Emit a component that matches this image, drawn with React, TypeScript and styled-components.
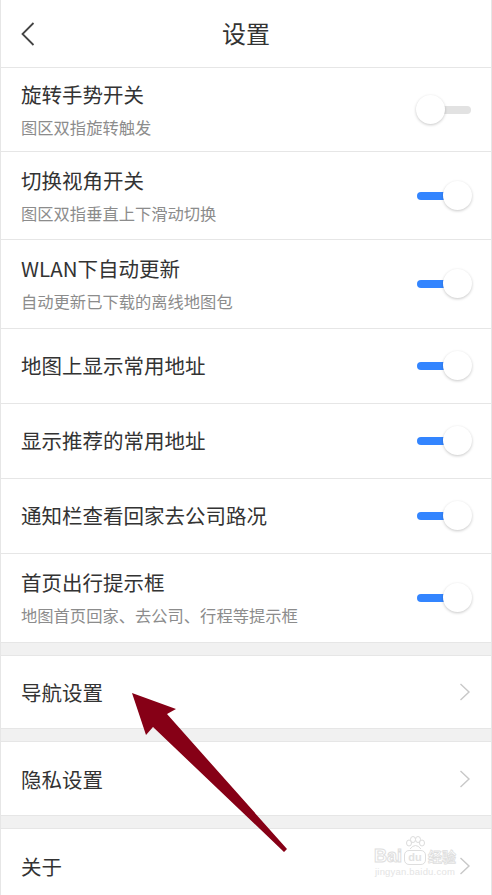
import React from "react";
import styled, { createGlobalStyle } from "styled-components";

const Global = createGlobalStyle`
  html, body { margin: 0; padding: 0; background: #ffffff; }
  body { font-family: "Noto Sans CJK SC", "Noto Sans", sans-serif; }
  * { box-sizing: border-box; }
`;

const Page = styled.div`
  position: relative;
  width: 492px;
  height: 895px;
  overflow: hidden;
  background: #ffffff;
  border-left: 1px solid #e6e6e6;
  border-right: 1px solid #e6e6e6;
`;

const Header = styled.header`
  position: relative;
  height: 68px;
  display: flex;
  align-items: center;
  justify-content: center;
  border-bottom: 1px solid #e6e6e6;
`;

const BackButton = styled.div`
  position: absolute;
  left: 20px;
  top: 22px;
  width: 14px;
  height: 24px;
  display: flex;
`;

const HeaderTitle = styled.h1`
  margin: 0;
  font-size: 24px;
  font-weight: 400;
  color: #333333;
  line-height: 30px;
  padding-bottom: 1px;
`;

const Row = styled.div<{ $h: number }>`
  height: ${(p) => p.$h}px;
  display: flex;
  align-items: center;
  justify-content: space-between;
  padding: 0 20px 0 20px;
  border-bottom: 1px solid #e6e6e6;
  background: #ffffff;
`;

const TextCol = styled.div`
  display: flex;
  flex-direction: column;
  gap: 10px;
  margin-top: -2px;
`;

const Title = styled.div`
  font-size: 20.5px;
  line-height: 26px;
  color: #333333;
`;

const Sub = styled.div`
  font-size: 16.3px;
  line-height: 20px;
  color: #8c8c8c;
`;

const Switch = styled.div<{ $on: boolean }>`
  position: relative;
  width: 56px;
  height: 30px;
  flex-shrink: 0;
  margin-right: -1px;
  &::before {
    content: "";
    position: absolute;
    left: 1px;
    right: 1px;
    top: 11px;
    height: 8px;
    border-radius: 4px;
    background: ${(p) => (p.$on ? "#3385ff" : "#e2e2e2")};
  }
`;

const Knob = styled.span<{ $on: boolean }>`
  position: absolute;
  top: 0;
  ${(p) => (p.$on ? "right: 0;" : "left: 0;")}
  width: 29px;
  height: 29px;
  border-radius: 50%;
  background: #ffffff;
  box-shadow: 0 1px 3px rgba(0, 0, 0, 0.22);
`;

const Spacer = styled.div`
  height: 13px;
  background: #f1f1f1;
  border-bottom: 1px solid #e6e6e6;
`;

const Chevron = styled.div`
  width: 12px;
  height: 18px;
  display: flex;
`;

const ArrowLayer = styled.svg`
  position: absolute;
  left: -1px;
  top: 0;
  pointer-events: none;
`;

const Watermark = styled.div`
  position: absolute;
  left: 373px;
  top: 836px;
  display: flex;
  flex-direction: column;
  align-items: center;
  pointer-events: none;
`;

const MarkTop = styled.div`
  display: flex;
  align-items: flex-end;
  gap: 2px;
`;

const MarkWord = styled.span`
  font-family: "Liberation Sans", Arial, sans-serif;
  font-weight: 700;
  font-size: 18px;
  line-height: 18px;
  color: #ffffff;
  -webkit-text-stroke: 1px #dedede;
`;

const MarkCn = styled.span`
  font-family: "Noto Sans CJK SC", sans-serif;
  font-weight: 700;
  font-size: 14px;
  line-height: 18px;
  color: #ffffff;
  -webkit-text-stroke: 0.8px #dedede;
`;

const PawBox = styled.div`
  display: flex;
  flex-direction: column;
  align-items: center;
`;

const DuBox = styled.span`
  font-family: "Liberation Sans", Arial, sans-serif;
  font-weight: 700;
  font-size: 11px;
  line-height: 11px;
  padding: 1px 3px;
  border: 1px solid #dedede;
  border-radius: 5px;
  color: #e2e2e2;
`;

const MarkUrl = styled.span`
  font-family: "Liberation Sans", Arial, sans-serif;
  font-size: 9.5px;
  line-height: 12px;
  color: #e4e4e4;
  margin-top: 1px;
  letter-spacing: 0.2px;
`;

type Toggle = { title: string; sub?: string; on: boolean; h: number };

const toggles: Toggle[] = [
  { title: "旋转手势开关", sub: "图区双指旋转触发", on: false, h: 84 },
  { title: "切换视角开关", sub: "图区双指垂直上下滑动切换", on: true, h: 88 },
  { title: "WLAN下自动更新", sub: "自动更新已下载的离线地图包", on: true, h: 89 },
  { title: "地图上显示常用地址", on: true, h: 75 },
  { title: "显示推荐的常用地址", on: true, h: 75 },
  { title: "通知栏查看回家去公司路况", on: true, h: 75 },
  { title: "首页出行提示框", sub: "地图首页回家、去公司、行程等提示框", on: true, h: 89 },
];

const ChevronIcon = () => (
  <Chevron>
    <svg width="12" height="18" viewBox="0 0 12 18">
      <polyline points="1.5,1 10,9 1.5,17" fill="none" stroke="#c8c8c8" strokeWidth="1.4" />
    </svg>
  </Chevron>
);

const LinkRow = ({ title, h }: { title: string; h: number }) => (
  <Row $h={h}>
    <Title>{title}</Title>
    <ChevronIcon />
  </Row>
);

export default function App() {
  return (
    <>
      <Global />
      <Page>
        <Header>
          <BackButton>
            <svg width="14" height="24" viewBox="0 0 14 24">
              <polyline points="12.5,1 1.5,12 12.5,23" fill="none" stroke="#444444" strokeWidth="1.8" />
            </svg>
          </BackButton>
          <HeaderTitle>设置</HeaderTitle>
        </Header>
        {toggles.map((t) => (
          <Row key={t.title} $h={t.h}>
            <TextCol>
              <Title>{t.title}</Title>
              {t.sub && <Sub>{t.sub}</Sub>}
            </TextCol>
            <Switch $on={t.on}>
              <Knob $on={t.on} />
            </Switch>
          </Row>
        ))}
        <Spacer />
        <LinkRow title="导航设置" h={73} />
        <Spacer />
        <LinkRow title="隐私设置" h={74} />
        <Spacer />
        <LinkRow title="关于" h={74} />
        <Watermark>
          <MarkTop>
            <MarkWord>Bai</MarkWord>
            <PawBox>
              <svg width="22" height="14" viewBox="0 0 22 14">
                <g fill="#ffffff" stroke="#dcdcdc" strokeWidth="1">
                  <ellipse cx="5" cy="7" rx="2.5" ry="3" />
                  <ellipse cx="9" cy="3.5" rx="2.5" ry="3" />
                  <ellipse cx="14" cy="3.5" rx="2.5" ry="3" />
                  <ellipse cx="18" cy="7" rx="2.5" ry="3" />
                  <path d="M6 13 Q11.5 6 17 13" />
                </g>
              </svg>
              <DuBox>du</DuBox>
            </PawBox>
            <MarkCn>经验</MarkCn>
          </MarkTop>
          <MarkUrl>jingyan.baidu.com</MarkUrl>
        </Watermark>
        <ArrowLayer width="492" height="895" viewBox="0 0 492 895">
          <polygon
            points="132,693 176,709 167,714 287,849 284,852 153,727 146,735"
            fill="#860016"
          />
        </ArrowLayer>
      </Page>
    </>
  );
}
